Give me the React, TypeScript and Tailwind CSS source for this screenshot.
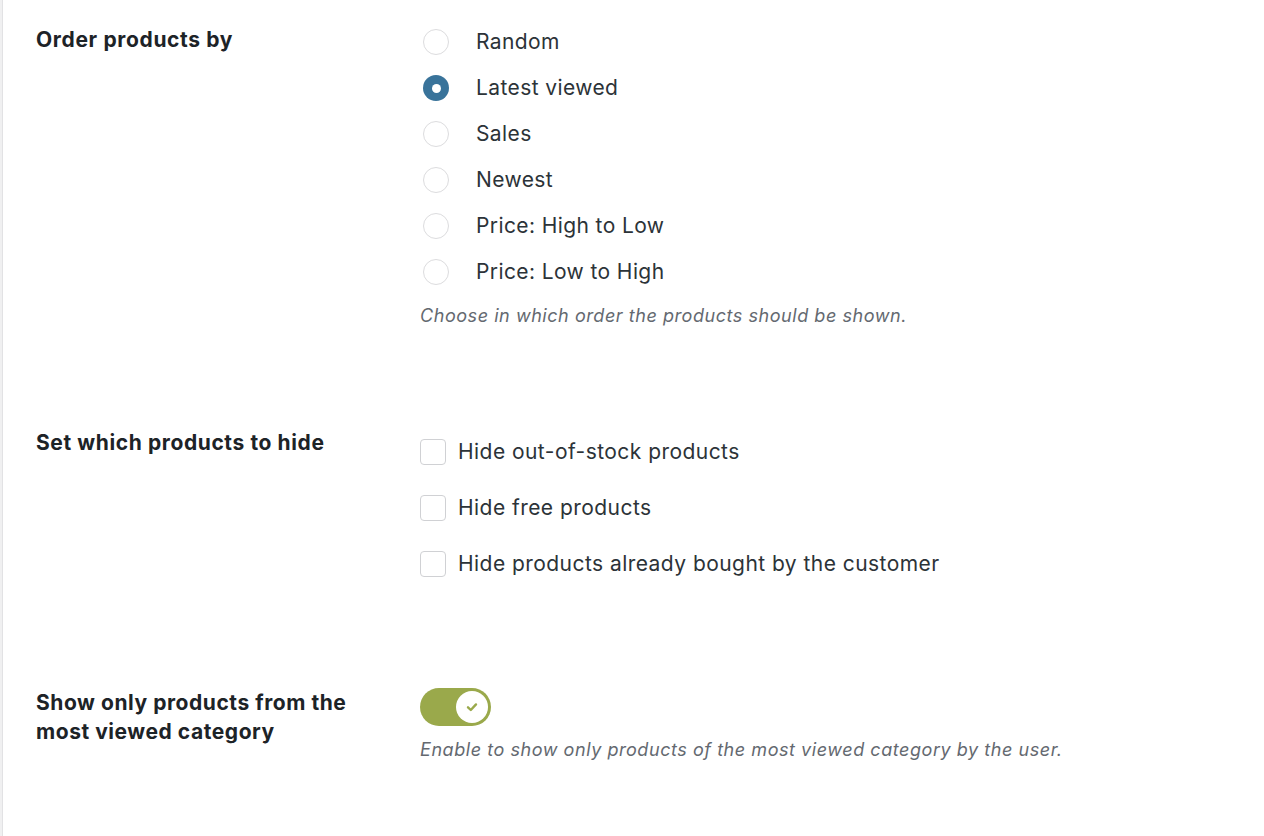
import { useState } from 'react'

const orderOptions = ['Random', 'Latest viewed', 'Sales', 'Newest', 'Price: High to Low', 'Price: Low to High']
const hideOptions = ['Hide out-of-stock products', 'Hide free products', 'Hide products already bought by the customer']

export default function App() {
  const [order, setOrder] = useState('Latest viewed')
  const [hidden, setHidden] = useState<string[]>([])
  const [onlyCategory, setOnlyCategory] = useState(true)

  const toggleHidden = (name: string) => {
    setHidden((h) => (h.includes(name) ? h.filter((x) => x !== name) : [...h, name]))
  }

  return (
    <div className="min-h-screen w-full bg-white flex font-['Inter',sans-serif] text-[#2c3338]">
      {/* bordo sinistro */}
      <div className="w-[3px] shrink-0 bg-[#f0f0f1] border-r border-[#e2e2e4]" />

      <div className="flex-1 flex flex-col">
        {/* Ordine */}
        <div className="flex pt-[19px]">
          <div className="w-[417px] shrink-0 pl-[33px]">
            <div className="mt-[7px] text-[21px] leading-[28px] font-bold tracking-[0.65px] text-[#1d2327]">Order products by</div>
          </div>
          <div className="flex flex-col">
            {orderOptions.map((opt) => {
              const checked = order === opt
              return (
                <label key={opt} className="h-[46px] flex items-center cursor-pointer" onClick={() => setOrder(opt)}>
                  <span
                    className={
                      checked
                        ? 'ml-[3px] w-[26px] h-[26px] rounded-full bg-[#39739a] flex items-center justify-center'
                        : 'ml-[3px] w-[26px] h-[26px] rounded-full border border-[#dcdcde] bg-white'
                    }
                  >
                    {checked && <span className="w-[9px] h-[9px] rounded-full bg-white" />}
                  </span>
                  <span className="ml-[27px] text-[21px] leading-[28px] tracking-[0.4px]">{opt}</span>
                </label>
              )
            })}
            <p className="mt-[9px] text-[18px] leading-[24px] italic tracking-[0.55px] text-[#646970]">
              Choose in which order the products should be shown.
            </p>
          </div>
        </div>

        {/* Nascondi */}
        <div className="flex mt-[96px]">
          <div className="w-[417px] shrink-0 pl-[33px]">
            <div className="mt-[5px] text-[21px] leading-[28px] font-bold tracking-[0.6px] text-[#1d2327]">Set which products to hide</div>
          </div>
          <div className="flex flex-col">
            {hideOptions.map((opt) => (
              <label key={opt} className="h-[56px] flex items-center cursor-pointer" onClick={() => toggleHidden(opt)}>
                <span className="w-[26px] h-[26px] rounded-[4px] border border-[#d0d1d4] bg-white flex items-center justify-center">
                  {hidden.includes(opt) && (
                    <svg width="16" height="16" viewBox="0 0 16 16" fill="none">
                      <path d="M3 8.5l3 3 7-7" stroke="#39739a" strokeWidth="2" strokeLinecap="round" strokeLinejoin="round" />
                    </svg>
                  )}
                </span>
                <span className="ml-[12px] text-[21px] leading-[28px] tracking-[0.45px]">{opt}</span>
              </label>
            ))}
          </div>
        </div>

        {/* Categoria */}
        <div className="flex mt-[96px]">
          <div className="w-[417px] shrink-0 pl-[33px]">
            <div className="text-[21px] leading-[29px] font-bold tracking-[0.55px] text-[#1d2327]">
              Show only products from the
              <br />
              most viewed category
            </div>
          </div>
          <div className="flex flex-col">
            <button
              onClick={() => setOnlyCategory(!onlyCategory)}
              className={
                onlyCategory
                  ? 'w-[71px] h-[38px] rounded-full bg-[#9aa94b] flex items-center justify-end pr-[3px]'
                  : 'w-[71px] h-[38px] rounded-full bg-[#c3c4c7] flex items-center justify-start pl-[3px]'
              }
            >
              <span className="w-[32px] h-[32px] rounded-full bg-white flex items-center justify-center">
                {onlyCategory && (
                  <svg width="16" height="16" viewBox="0 0 16 16" fill="none">
                    <path d="M4 8.3l2.8 2.7L12 5.4" stroke="#9aa94b" strokeWidth="2.4" strokeLinecap="round" strokeLinejoin="round" />
                  </svg>
                )}
              </span>
            </button>
            <p className="mt-[12px] text-[18px] leading-[24px] italic tracking-[0.55px] text-[#646970]">
              Enable to show only products of the most viewed category by the user.
            </p>
          </div>
        </div>
      </div>
    </div>
  )
}
